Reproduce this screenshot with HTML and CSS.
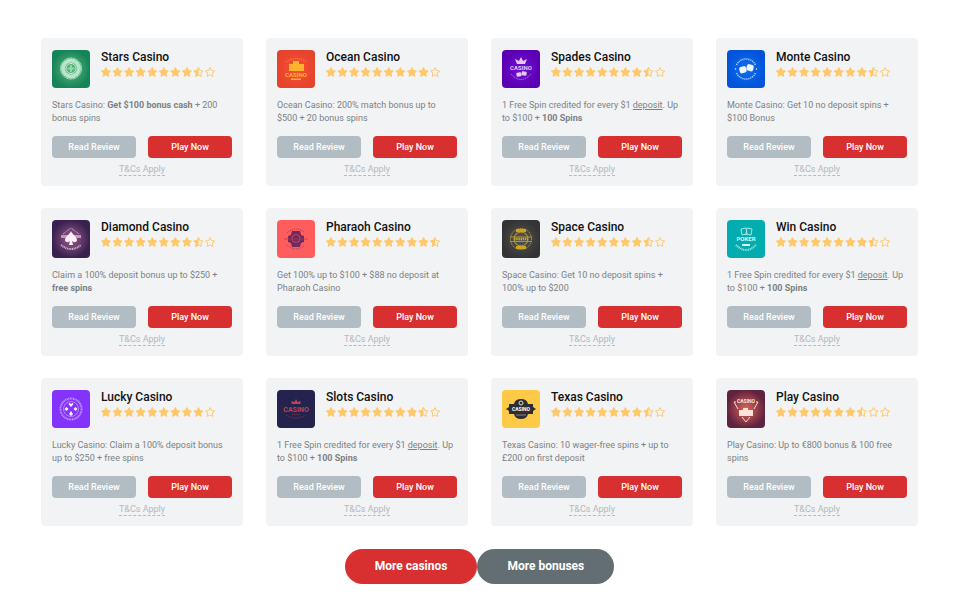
FILE: index.html
```html
<!DOCTYPE html>
<html lang="en">
<head>
<meta charset="utf-8">
<meta name="viewport" content="width=device-width, initial-scale=1">
<title>Casinos</title>
<link rel="stylesheet" href="styles.css">
</head>
<body>
<svg class="sprite" aria-hidden="true">
<defs>
<path id="star" d="M259.300 17.800L194 150.200 47.900 171.500c-26.200 3.800-36.700 36.100-17.700 54.600l105.700 103-25 145.500c-4.500 26.300 23.200 46 46.400 33.700L288 439.600l130.700 68.700c23.200 12.200 50.900-7.400 46.400-33.700l-25-145.500 105.700-103c19-18.500 8.500-50.800-17.700-54.600L382 150.200 316.700 17.800c-11.700-23.600-45.600-23.900-57.400 0z"/>
<path id="star-empty" d="M528.100 171.500L382 150.200 316.700 17.800c-11.700-23.600-45.600-23.900-57.400 0L194 150.200 47.900 171.500c-26.200 3.800-36.700 36.100-17.700 54.600l105.700 103-25 145.500c-4.500 26.300 23.200 46 46.400 33.700L288 439.600l130.700 68.700c23.200 12.200 50.900-7.400 46.400-33.700l-25-145.500 105.700-103c19-18.500 8.500-50.800-17.700-54.600zM388.600 312.300l23.700 138.400L288 385.400l-124.300 65.300 23.700-138.400-100.600-98 139-20.200 62.200-126 62.200 126 139 20.200-100.600 98z"/>
<g id="star-half"><use href="#star-empty"/><path d="M288 0c-12 0-23 6-28.700 17.800L194 150.200 47.900 171.500c-26.200 3.800-36.700 36.100-17.700 54.600l105.700 103-25 145.500c-4.500 26.300 23.200 46 46.400 33.700L288 439.600z"/></g>
<g id="stars7"><use href="#star"/><use href="#star" x="630"/><use href="#star" x="1260"/><use href="#star" x="1890"/><use href="#star" x="2520"/><use href="#star" x="3150"/><use href="#star" x="3780"/></g>
<symbol id="rate75" viewBox="20 0 6206 512"><use href="#stars7"/><use href="#star-half" x="4410"/><use href="#star-empty" x="5040"/><use href="#star-empty" x="5670"/></symbol>
<symbol id="rate85" viewBox="20 0 6206 512"><use href="#stars7"/><use href="#star" x="4410"/><use href="#star-half" x="5040"/><use href="#star-empty" x="5670"/></symbol>
<symbol id="rate90" viewBox="20 0 6206 512"><use href="#stars7"/><use href="#star" x="4410"/><use href="#star" x="5040"/><use href="#star-empty" x="5670"/></symbol>
<symbol id="rate95" viewBox="20 0 6206 512"><use href="#stars7"/><use href="#star" x="4410"/><use href="#star" x="5040"/><use href="#star-half" x="5670"/></symbol>
<radialGradient id="green"><stop stop-color="#5dba7e"/><stop offset="1" stop-color="#168459"/></radialGradient>
<radialGradient id="red"><stop stop-color="#fa5034"/><stop offset="1" stop-color="#e6432d"/></radialGradient>
<radialGradient id="purple"><stop stop-color="#7510d8"/><stop offset="1" stop-color="#5b00b3"/></radialGradient>
<radialGradient id="blue"><stop stop-color="#126df0"/><stop offset="1" stop-color="#0354d9"/></radialGradient>
<radialGradient id="plum"><stop stop-color="#9c5d8c"/><stop offset="1" stop-color="#382050"/></radialGradient>
<radialGradient id="black"><stop stop-color="#555"/><stop offset="1" stop-color="#343434"/></radialGradient>
<radialGradient id="wine"><stop stop-color="#df6558"/><stop offset="1" stop-color="#60233f"/></radialGradient>
</defs>
</svg>
<main class="page">
<section class="casinos">

<article class="card">
<header class="head">
<svg class="logo" viewBox="0 0 38 38" aria-hidden="true"><rect width="38" height="38" fill="url(#green)"/><g fill="none" stroke="#d8f5e1"><circle cx="19" cy="18.500" r="10.500" stroke-width="1" stroke-dasharray="1 .5"/><circle cx="19" cy="18.500" r="8" stroke-width="4" opacity=".8"/><circle cx="19" cy="18.500" r="5" stroke-width="1"/><path d="M19 15v7M15.500 18.500h7" stroke-width="2" opacity=".5"/></g></svg>
<div><h2 class="name">Stars Casino</h2><svg class="rating" role="img" aria-label="8.5 out of 10"><use href="#rate85"/></svg></div>
</header>
<p class="offer">Stars Casino: <b>Get $100 bonus cash</b> + 200 bonus spins</p>
<div class="actions"><button class="btn review">Read Review</button><button class="btn play">Play Now</button></div>
<a class="terms" href="#">T&amp;Cs Apply</a>
</article>

<article class="card">
<header class="head">
<svg class="logo" viewBox="0 0 38 38" aria-hidden="true"><rect width="38" height="38" fill="url(#red)"/><g fill="#ffb22e"><path d="M12 14h4v-3h6v3h5v7H12z"/><text class="mark" x="19" y="27">CASINO</text><path d="M14 28.500h10V30H14z"/></g><path d="M9 12Q19 5 29 12" fill="none" stroke="#ffa22c" stroke-dasharray="1 1"/></svg>
<div><h2 class="name">Ocean Casino</h2><svg class="rating" role="img" aria-label="9 out of 10"><use href="#rate90"/></svg></div>
</header>
<p class="offer">Ocean Casino: 200% match bonus up to $500 + 20 bonus spins</p>
<div class="actions"><button class="btn review">Read Review</button><button class="btn play">Play Now</button></div>
<a class="terms" href="#">T&amp;Cs Apply</a>
</article>

<article class="card">
<header class="head">
<svg class="logo" viewBox="0 0 38 38" aria-hidden="true"><rect width="38" height="38" fill="url(#purple)"/><g fill="#e2c9f8"><path d="M13 9l4 2 2-4 2 4 4-2-2 5h-8z"/><text class="mark" x="19" y="20">CASINO</text><rect x="14.500" y="22.500" width="5" height="4" rx="1" transform="rotate(-12 17 25)"/><rect x="19.500" y="21.500" width="5" height="4" rx="1" transform="rotate(10 22 24)"/></g><path d="M9 24Q19 35 29 24" fill="none" stroke="#c391ee" stroke-dasharray="1 1"/></svg>
<div><h2 class="name">Spades Casino</h2><svg class="rating" role="img" aria-label="8.5 out of 10"><use href="#rate85"/></svg></div>
</header>
<p class="offer">1 Free Spin credited for every $1 <a href="#">deposit</a>. Up to $100 + <b>100 Spins</b></p>
<div class="actions"><button class="btn review">Read Review</button><button class="btn play">Play Now</button></div>
<a class="terms" href="#">T&amp;Cs Apply</a>
</article>

<article class="card">
<header class="head">
<svg class="logo" viewBox="0 0 38 38" aria-hidden="true"><rect width="38" height="38" fill="url(#blue)"/><g fill="none" stroke="#a9cffc" stroke-width="1.500" stroke-dasharray="1.200 .8"><path d="M9.500 15A10.500 10.500 0 0 1 28.500 15M9.500 23A10.500 10.500 0 0 0 28.500 23"/></g><g fill="#eef6ff"><rect x="12.500" y="16.500" width="7" height="6.500" rx="2" transform="rotate(-15 16 20)"/><rect x="19.500" y="14.500" width="7" height="6.500" rx="2" transform="rotate(15 23 18)"/><circle cx="8.500" cy="19" r=".7"/><circle cx="29.500" cy="19" r=".7"/></g></svg>
<div><h2 class="name">Monte Casino</h2><svg class="rating" role="img" aria-label="8.5 out of 10"><use href="#rate85"/></svg></div>
</header>
<p class="offer">Monte Casino: Get 10 no deposit spins + $100 Bonus</p>
<div class="actions"><button class="btn review">Read Review</button><button class="btn play">Play Now</button></div>
<a class="terms" href="#">T&amp;Cs Apply</a>
</article>

<article class="card">
<header class="head">
<svg class="logo" viewBox="0 0 38 38" aria-hidden="true"><rect width="38" height="38" fill="url(#plum)"/><g fill="none" stroke="#d9b9d2"><path d="M11 14L19 8l8 6" stroke-dasharray="1 .6"/><path d="M9 25Q19 33 29 25" stroke-width="2" stroke-dasharray="1 .7"/><path d="M9 16.500h20" stroke-width="3" opacity=".75"/></g><path d="M19 11c1 3 6 6 6 9 0 2-3 3-5 1l1 4h-4l1-4c-2 2-5 1-5-1 0-3 5-6 6-9z" fill="#fff0fa"/></svg>
<div><h2 class="name">Diamond Casino</h2><svg class="rating" role="img" aria-label="8.5 out of 10"><use href="#rate85"/></svg></div>
</header>
<p class="offer">Claim a 100% deposit bonus up to $250 + <b>free spins</b></p>
<div class="actions"><button class="btn review">Read Review</button><button class="btn play">Play Now</button></div>
<a class="terms" href="#">T&amp;Cs Apply</a>
</article>

<article class="card">
<header class="head">
<svg class="logo" viewBox="0 0 38 38" aria-hidden="true"><rect width="38" height="38" fill="#ff5c5d"/><path d="M15 11h8l1 4 3 1v6l-3 1-1 4h-8l-1-4-3-1v-6l3-1z" fill="#72295c"/><circle cx="19" cy="18.500" r="4" fill="none" stroke="#c94360"/><g fill="none" stroke="#a43b5d"><path d="M10 13Q19 5 28 13M10 25Q19 33 28 25" stroke-dasharray="1 1"/><path d="M7 19h24" stroke-width=".7"/></g></svg>
<div><h2 class="name">Pharaoh Casino</h2><svg class="rating" role="img" aria-label="9.5 out of 10"><use href="#rate95"/></svg></div>
</header>
<p class="offer">Get 100% up to $100 + $88 no deposit at Pharaoh Casino</p>
<div class="actions"><button class="btn review">Read Review</button><button class="btn play">Play Now</button></div>
<a class="terms" href="#">T&amp;Cs Apply</a>
</article>

<article class="card">
<header class="head">
<svg class="logo" viewBox="0 0 38 38" aria-hidden="true"><rect width="38" height="38" fill="url(#black)"/><g fill="none" stroke="#c9a526"><circle cx="19" cy="19" r="10.500" stroke-dasharray="1.200 .8"/><path d="M14 10.500h10M14 27.500h10" stroke-width="3"/><circle cx="19" cy="19" r="7"/><path d="M8 17h22M8 21.500h22" stroke-width=".8"/><path d="M12 19h14" stroke-width="2.500" stroke-dasharray="1.500 .7"/></g></svg>
<div><h2 class="name">Space Casino</h2><svg class="rating" role="img" aria-label="8.5 out of 10"><use href="#rate85"/></svg></div>
</header>
<p class="offer">Space Casino: Get 10 no deposit spins + 100% up to $200</p>
<div class="actions"><button class="btn review">Read Review</button><button class="btn play">Play Now</button></div>
<a class="terms" href="#">T&amp;Cs Apply</a>
</article>

<article class="card">
<header class="head">
<svg class="logo" viewBox="0 0 38 38" aria-hidden="true"><rect width="38" height="38" fill="#03acae"/><g fill="none" stroke="#a9e5e5"><path d="M14 9l5-1 1 6-5 1zM20 8l5 1-1 6-5-1z"/><path d="M9 25Q19 35 29 25" stroke-width="2" stroke-dasharray="1 .7"/></g><g fill="#d7f6f5"><text class="mark" x="19" y="21">POKER</text><path d="M15 24h8v2h-8z"/></g></svg>
<div><h2 class="name">Win Casino</h2><svg class="rating" role="img" aria-label="8.5 out of 10"><use href="#rate85"/></svg></div>
</header>
<p class="offer">1 Free Spin credited for every $1 <a href="#">deposit</a>. Up to $100 + <b>100 Spins</b></p>
<div class="actions"><button class="btn review">Read Review</button><button class="btn play">Play Now</button></div>
<a class="terms" href="#">T&amp;Cs Apply</a>
</article>

<article class="card">
<header class="head">
<svg class="logo" viewBox="0 0 38 38" aria-hidden="true"><rect width="38" height="38" fill="#8433fc"/><circle cx="19" cy="19" r="10.500" fill="none" stroke="#c29aff" stroke-width="2" stroke-dasharray="1 .6"/><circle cx="19" cy="19" r="7.500" fill="none" stroke="#b786ff"/><g fill="#fff"><path d="M19 17l-2.500-3 1-1 1.500 1 1.500-1 1 1zM19 21l2 3-2 2-2-2zM12.500 19l2-2 2 2-2 2zM21.500 19l2-2 2 2-2 2z"/></g></svg>
<div><h2 class="name">Lucky Casino</h2><svg class="rating" role="img" aria-label="9 out of 10"><use href="#rate90"/></svg></div>
</header>
<p class="offer">Lucky Casino: Claim a 100% deposit bonus up to $250 + free spins</p>
<div class="actions"><button class="btn review">Read Review</button><button class="btn play">Play Now</button></div>
<a class="terms" href="#">T&amp;Cs Apply</a>
</article>

<article class="card">
<header class="head">
<svg class="logo" viewBox="0 0 38 38" aria-hidden="true"><rect width="38" height="38" fill="#23234d"/><g fill="#bd4355"><path d="M14.500 11l3 1 1.500-3 1.500 3 3-1v3h-9z"/><text class="mark tall" x="19" y="22">CASINO</text></g><path d="M15 24.500h8M9 25Q19 31 29 25" fill="none" stroke="#83364e" stroke-dasharray="1 .8"/></svg>
<div><h2 class="name">Slots Casino</h2><svg class="rating" role="img" aria-label="8.5 out of 10"><use href="#rate85"/></svg></div>
</header>
<p class="offer">1 Free Spin credited for every $1 <a href="#">deposit</a>. Up to $100 + <b>100 Spins</b></p>
<div class="actions"><button class="btn review">Read Review</button><button class="btn play">Play Now</button></div>
<a class="terms" href="#">T&amp;Cs Apply</a>
</article>

<article class="card">
<header class="head">
<svg class="logo" viewBox="0 0 38 38" aria-hidden="true"><rect width="38" height="38" fill="#fdca48"/><path d="M4 19l3-2v-3h5q1-5 7-5t7 5h5v3l3 2-3 2v3h-5q-1 5-7 5t-7-5H7v-3z" fill="#2e2d30"/><circle cx="19" cy="13" r="2" fill="none" stroke="#ddd"/><text class="mark small" x="19" y="21" fill="#fff">CASINO</text><path d="M14 25h10" stroke="#8c8780"/></svg>
<div><h2 class="name">Texas Casino</h2><svg class="rating" role="img" aria-label="8.5 out of 10"><use href="#rate85"/></svg></div>
</header>
<p class="offer">Texas Casino: 10 wager-free spins + up to £200 on first deposit</p>
<div class="actions"><button class="btn review">Read Review</button><button class="btn play">Play Now</button></div>
<a class="terms" href="#">T&amp;Cs Apply</a>
</article>

<article class="card">
<header class="head">
<svg class="logo" viewBox="0 0 38 38" aria-hidden="true"><rect width="38" height="38" fill="url(#wine)"/><path d="M9 12H7l4 7M29 12h2l-4 7M15 27l4 5 4-5" fill="none" stroke="#ffd6cf"/><g fill="#ffe1dc"><text class="mark small" x="19" y="13">CASINO</text><path d="M12 20h4v-2h5v2h5v6H12z"/></g></svg>
<div><h2 class="name">Play Casino</h2><svg class="rating" role="img" aria-label="7.5 out of 10"><use href="#rate75"/></svg></div>
</header>
<p class="offer">Play Casino: Up to €800 bonus &amp; 100 free spins</p>
<div class="actions"><button class="btn review">Read Review</button><button class="btn play">Play Now</button></div>
<a class="terms" href="#">T&amp;Cs Apply</a>
</article>

</section>
<nav class="more"><a class="pill red" href="#">More casinos</a><a class="pill gray" href="#">More bonuses</a></nav>
</main>
</body>
</html>
```
FILE: styles.css
```css
* { box-sizing: border-box; }
body { margin: 0; background: #fff; font-family: Roboto, sans-serif; }
.sprite { position: absolute; width: 0; height: 0; }
.page { padding: 38px 50px 19px 41px; }
.casinos { display: grid; grid-template-columns: repeat(4, 1fr); gap: 22px 23px; }
.card { display: flex; flex-direction: column; padding: 12px 11px 9px; border-radius: 4px; background: #f1f3f5; }
.head { display: flex; gap: 11px; height: 38px; margin-bottom: 11px; }
.logo { width: 38px; height: 38px; border-radius: 4px; flex: none; }
.mark { font: 700 6px Roboto, sans-serif; text-anchor: middle; }
.tall { font-family: "Liberation Sans Narrow", Roboto, sans-serif; font-size: 7px; }
.small { font-family: "Liberation Sans Narrow", Roboto, sans-serif; font-size: 5px; }
.name { margin: 0; font-size: 12px; line-height: 14px; font-weight: 500; color: #111; }
.rating { display: block; width: 114px; height: 10px; margin-top: 3px; fill: #ffc86b; }
.offer { margin: 0 0 11px; font-size: 9px; line-height: 13px; color: #7c8284; }
.offer a { color: inherit; }
.offer b { font-weight: 700; }
.actions { display: grid; grid-template-columns: 1fr 1fr; gap: 12px; }
.btn { height: 22px; padding: 0; border: 0; border-radius: 4px; font: 500 9px Roboto, sans-serif; color: #fff; cursor: pointer; }
.review { background: #b2bdc3; }
.play { background: #d82f30; }
.terms { align-self: center; margin-top: 6px; border-bottom: 1px dashed #b2bdc3; font-size: 9px; line-height: 11px; padding-bottom: 0; margin-bottom: 1px; color: #b5b9bd; text-decoration: none; }
.more { display: flex; justify-content: center; margin-top: 23px; }
.pill { padding: 0 30px; border-radius: 18px; font-size: 12px; line-height: 35px; font-weight: 700; color: #fff; text-decoration: none; }
.red { background: #d82f30; }
.gray { background: #636e72; }
```
